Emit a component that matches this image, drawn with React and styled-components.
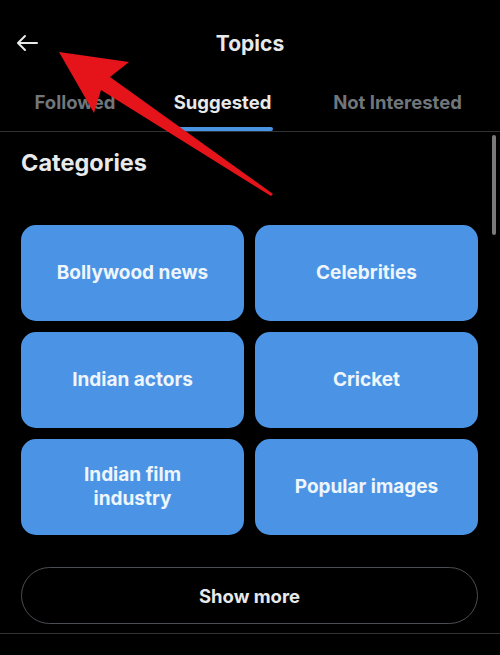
import React from "react";
import styled, { createGlobalStyle } from "styled-components";

const GlobalStyle = createGlobalStyle`
  html, body {
    margin: 0;
    padding: 0;
    background: #000;
  }
  body {
    font-family: Inter, "Noto Sans", "Liberation Sans", sans-serif;
    color: #e7e9ea;
  }
`;

const categories = [
  "Bollywood news",
  "Celebrities",
  "Indian actors",
  "Cricket",
  "Indian film industry",
  "Popular images",
];

const tabs = [
  { label: "Followed", active: false },
  { label: "Suggested", active: true },
  { label: "Not Interested", active: false },
];

const App = () => {
  return (
    <Page>
      <GlobalStyle />
      <Header>
        <BackButton aria-label="Back">
          <svg width="26" height="24" viewBox="0 0 26 24" fill="none">
            <path
              d="M23 12H4.5M11 5l-7 7 7 7"
              stroke="#e7e9ea"
              strokeWidth="2"
              strokeLinecap="round"
              strokeLinejoin="round"
            />
          </svg>
        </BackButton>
        <Title>Topics</Title>
      </Header>

      <Tabs>
        {tabs.map((tab) => (
          <Tab key={tab.label} $active={tab.active}>
            <TabLabel $active={tab.active}>{tab.label}</TabLabel>
          </Tab>
        ))}
      </Tabs>

      <Content>
        <Heading>Categories</Heading>
        <Grid>
          {categories.map((name) => (
            <Card key={name}>
              <CardText>{name}</CardText>
            </Card>
          ))}
        </Grid>
        <ShowMore type="button">Show more</ShowMore>
      </Content>
      <Footer />

      <Scrollbar />

      {/* red annotation arrow */}
      <Annotation viewBox="0 0 500 655" width="500" height="655">
        <polygon
          points="59,52 129,62 110,77 273,194 271,196 101,90 94,113"
          fill="#e5141b"
        />
      </Annotation>
    </Page>
  );
};

const Page = styled.div`
  position: relative;
  width: 500px;
  height: 655px;
  background: #000;
  overflow: hidden;
`;

const Header = styled.header`
  position: relative;
  height: 86px;
  display: flex;
  align-items: center;
  justify-content: center;
`;

const BackButton = styled.button`
  position: absolute;
  left: 14px;
  top: 31px;
  background: none;
  border: none;
  padding: 0;
  display: flex;
  cursor: pointer;
`;

const Title = styled.h1`
  margin: 0;
  font-size: 21px;
  font-weight: 700;
  color: #e7e9ea;
`;

const Tabs = styled.nav`
  display: grid;
  grid-template-columns: 150px 145px 205px;
  height: 45px;
  border-bottom: 1px solid #2f3336;
`;

const Tab = styled.div`
  display: flex;
  justify-content: center;
  align-items: flex-start;
`;

const TabLabel = styled.span`
  position: relative;
  height: 100%;
  padding-top: 5px;
  box-sizing: border-box;
  font-size: 18.5px;
  font-weight: 700;
  color: ${({ $active }) => ($active ? "#e7e9ea" : "#71767b")};

  &::after {
    content: "";
    display: ${({ $active }) => ($active ? "block" : "none")};
    position: absolute;
    left: 4px;
    right: -2px;
    bottom: 0;
    height: 4px;
    border-radius: 2px;
    background: #4a95e3;
  }
`;

const Content = styled.main`
  padding: 0 22px 0 21px;
`;

const Heading = styled.h2`
  margin: 16px 0 48px;
  font-size: 23.5px;
  font-weight: 700;
  color: #e7e9ea;
`;

const Grid = styled.div`
  display: grid;
  grid-template-columns: 1fr 1fr;
  grid-auto-rows: 96px;
  gap: 11px 11px;
`;

const Card = styled.div`
  display: flex;
  align-items: center;
  justify-content: center;
  padding: 0 16px;
  background: #4b94e5;
  border-radius: 15px;
`;

const CardText = styled.span`
  max-width: 162px;
  font-size: 19px;
  font-weight: 700;
  line-height: 24px;
  color: #eef5fc;
  text-align: center;
`;

const ShowMore = styled.button`
  display: block;
  width: 100%;
  height: 57px;
  margin-top: 32px;
  background: transparent;
  border: 1px solid #4a4d51;
  border-radius: 29px;
  font-family: inherit;
  font-size: 18.5px;
  font-weight: 700;
  color: #e7e9ea;
  cursor: pointer;
`;

const Footer = styled.div`
  margin-top: 9px;
  border-top: 1px solid #2f3336;
`;

const Scrollbar = styled.div`
  position: absolute;
  top: 135px;
  right: 4px;
  width: 4px;
  height: 100px;
  border-radius: 2px;
  background: #7a7a7a;
`;

const Annotation = styled.svg`
  position: absolute;
  top: 0;
  left: 0;
  pointer-events: none;
`;

export default App;
